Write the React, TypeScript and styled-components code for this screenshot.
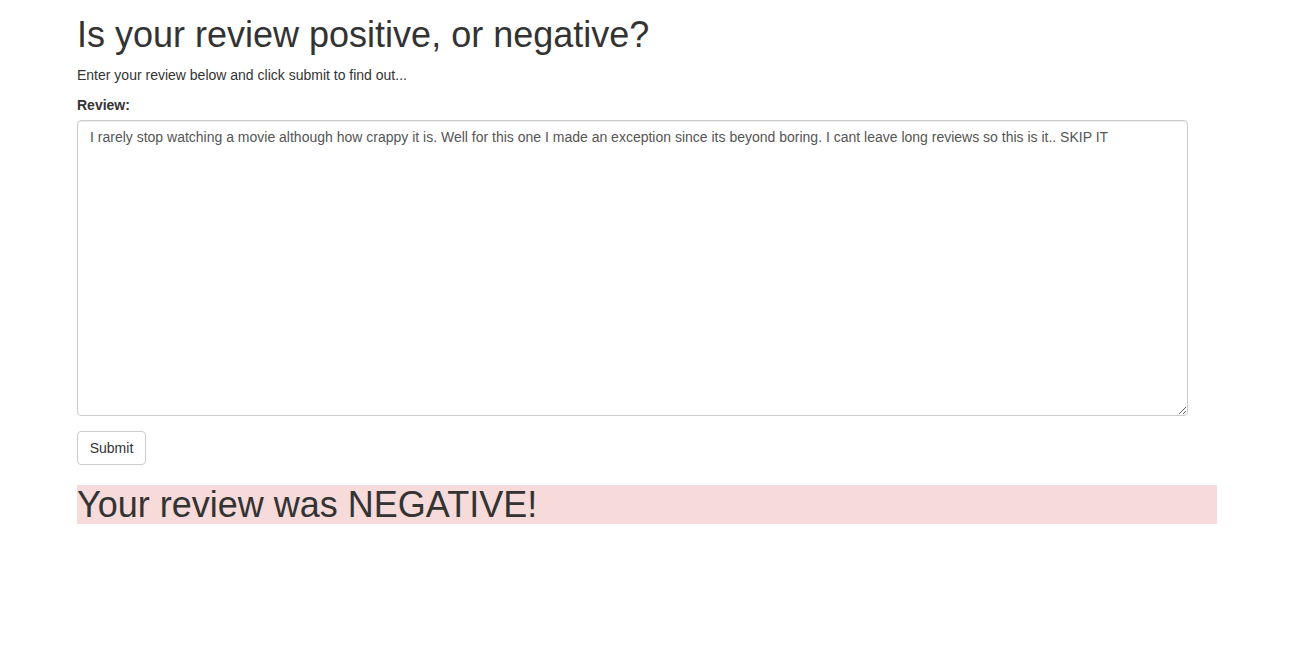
import React, { FC, useState } from 'react';
import styled, { createGlobalStyle } from 'styled-components';

const GlobalStyle = createGlobalStyle`
  html, body {
    margin:0;
    padding:0;
    background:#fff;
  }
  body {
    font-family:"Liberation Sans", Arial, Helvetica, sans-serif;
    font-size:14px;
    line-height:1.42857143;
    color:#333;
  }
  * {
    box-sizing:border-box;
  }
`;

const Container = styled.div`
  width:1140px;
  margin-left:77px;
  padding-top:15px;
`;

const Title = styled.h1<{ $tone?: 'danger' | 'success' }>`
  margin:${p => (p.$tone ? '20px' : '0')} 0 10px;
  font-size:36px;
  font-weight:500;
  line-height:1.1;
  color:#333;
  background:${p => (p.$tone === 'danger' ? '#f7dbdb' : p.$tone === 'success' ? '#dff0d8' : 'transparent')};
`;

const Lead = styled.p`
  margin:0 0 10px;
`;

const FormGroup = styled.div`
  margin-bottom:15px;
`;

const Label = styled.label`
  display:inline-block;
  max-width:100%;
  margin-bottom:5px;
  font-weight:bold;
`;

const TextArea = styled.textarea`
  display:block;
  width:1111px;
  height:296px;
  padding:6px 12px;
  font-family:inherit;
  font-size:14px;
  line-height:1.42857143;
  color:#555;
  background:#fff;
  border:1px solid #ccc;
  border-radius:4px;
  box-shadow:inset 0 1px 1px rgba(0,0,0,.075);
  outline:none;
`;

const Button = styled.button`
  display:inline-block;
  width:69px;
  padding:6px 0;
  font-family:inherit;
  font-size:14px;
  line-height:1.42857143;
  text-align:center;
  color:#333;
  background:#fff;
  border:1px solid #ccc;
  border-radius:4px;
  cursor:pointer;
`;

const initialReview =
  'I rarely stop watching a movie although how crappy it is. Well for this one I made an exception since its beyond boring. I cant leave long reviews so this is it.. SKIP IT';

const App: FC = () => {
  const [review, setReview] = useState(initialReview);
  return (
    <>
      <GlobalStyle />
      <Container>
        <Title>Is your review positive, or negative?</Title>
        <Lead>Enter your review below and click submit to find out...</Lead>
        <form onSubmit={e => e.preventDefault()}>
          <FormGroup>
            <Label htmlFor='review'>Review:</Label>
            <TextArea id='review' value={review} onChange={e => setReview(e.target.value)} />
          </FormGroup>
          <Button type='submit'>Submit</Button>
        </form>
        <Title $tone='danger'>Your review was NEGATIVE!</Title>
      </Container>
    </>
  );
};

export default App;
